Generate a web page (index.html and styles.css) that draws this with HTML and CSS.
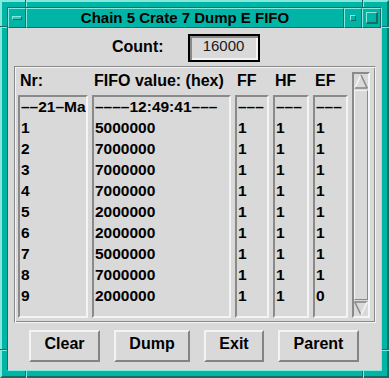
FILE: index.html
```html
<!DOCTYPE html>
<html>
<head>
<meta charset="utf-8">
<link rel="stylesheet" href="styles.css">
</head>
<body>
<div class="window">
  <div class="inner">
    <div class="titlebar">
      <div class="tb-seg tb-menu"><span class="menu-bar"></span></div>
      <div class="tb-seg tb-title">Chain 5 Crate 7 Dump E FIFO</div>
      <div class="tb-seg tb-min"><span class="min-sq"></span></div>
      <div class="tb-seg tb-max"><span class="max-sq"></span></div>
    </div>
    <div class="client">
      <div class="count-row">
        <span class="count-label">Count:</span>
        <div class="count-field">16000</div>
      </div>
      <div class="frame">
        <div class="cols">
          <div class="col col-nr">
            <div class="hdr">Nr:</div>
            <div class="list">
              <div class="row">––21–Ma</div>
              <div class="row">1</div><div class="row">2</div><div class="row">3</div>
              <div class="row">4</div><div class="row">5</div><div class="row">6</div>
              <div class="row">7</div><div class="row">8</div><div class="row">9</div>
            </div>
          </div>
          <div class="col col-fifo">
            <div class="hdr">FIFO value: (hex)</div>
            <div class="list">
              <div class="row">––––12:49:41–––</div>
              <div class="row">5000000</div><div class="row">7000000</div><div class="row">7000000</div>
              <div class="row">7000000</div><div class="row">2000000</div><div class="row">2000000</div>
              <div class="row">5000000</div><div class="row">7000000</div><div class="row">2000000</div>
            </div>
          </div>
          <div class="col col-ff">
            <div class="hdr">FF</div>
            <div class="list">
              <div class="row">–––</div>
              <div class="row">1</div><div class="row">1</div><div class="row">1</div>
              <div class="row">1</div><div class="row">1</div><div class="row">1</div>
              <div class="row">1</div><div class="row">1</div><div class="row">1</div>
            </div>
          </div>
          <div class="col col-hf">
            <div class="hdr">HF</div>
            <div class="list">
              <div class="row">–––</div>
              <div class="row">1</div><div class="row">1</div><div class="row">1</div>
              <div class="row">1</div><div class="row">1</div><div class="row">1</div>
              <div class="row">1</div><div class="row">1</div><div class="row">1</div>
            </div>
          </div>
          <div class="col col-ef">
            <div class="hdr">EF</div>
            <div class="list">
              <div class="row">–––</div>
              <div class="row">1</div><div class="row">1</div><div class="row">1</div>
              <div class="row">1</div><div class="row">1</div><div class="row">1</div>
              <div class="row">1</div><div class="row">1</div><div class="row">0</div>
            </div>
          </div>
          <div class="scrollbar">
            <svg class="arrow" width="14" height="15" viewBox="0 0 14 15">
              <polygon points="7,1 1,14 13,14" fill="#d9d9d9"/>
              <line x1="0.8" y1="14" x2="7" y2="1" stroke="#f4f4f4" stroke-width="1.6"/>
              <line x1="7" y1="1" x2="13.2" y2="14" stroke="#8a8a8a" stroke-width="1.6"/>
              <line x1="1" y1="14" x2="13.5" y2="14" stroke="#8a8a8a" stroke-width="1.6"/>
            </svg>
            <div class="slider"></div>
            <svg class="arrow" width="14" height="15" viewBox="0 0 14 15">
              <polygon points="1,1 13,1 7,14" fill="#d9d9d9"/>
              <line x1="0.5" y1="1" x2="13.5" y2="1" stroke="#8a8a8a" stroke-width="1.6"/>
              <line x1="0.8" y1="1" x2="7" y2="14" stroke="#8a8a8a" stroke-width="1.6"/>
              <line x1="7" y1="14" x2="13.2" y2="1" stroke="#f4f4f4" stroke-width="1.6"/>
            </svg>
          </div>
        </div>
      </div>
      <div class="buttons">
        <div class="btn btn-clear">Clear</div>
        <div class="btn btn-dump">Dump</div>
        <div class="btn btn-exit">Exit</div>
        <div class="btn btn-parent">Parent</div>
      </div>
    </div>
  </div>
  <div class="notches">
    <span class="nv n-tl"></span>
    <span class="nv n-tr"></span>
    <span class="nv n-bl"></span>
    <span class="nv n-br"></span>
    <span class="nh n-lt"></span>
    <span class="nh n-rt"></span>
    <span class="nh n-lb"></span>
    <span class="nh n-rb"></span>
  </div>
</div>
</body>
</html>
```

FILE: styles.css
```css
* { box-sizing: border-box; }
html, body { margin: 0; padding: 0; }
body {
  width: 389px;
  height: 378px;
  overflow: hidden;
  background: #00b5a5;
  font-family: "Liberation Sans", Arial, sans-serif;
  color: #000;
}
.window {
  position: relative;
  width: 389px;
  height: 378px;
  background: #00b5a5;
  border: 2px solid;
  border-color: #86e8dc #1d6a62 #1d6a62 #86e8dc;
  padding: 5px;
}
.inner {
  height: 100%;
  border: 1px solid;
  border-color: #1d6a62 #86e8dc #86e8dc #1d6a62;
  display: flex;
  flex-direction: column;
}
.titlebar {
  height: 20px;
  display: flex;
  flex: none;
}
.tb-seg {
  height: 20px;
  border: 1px solid;
  border-color: #86e8dc #1d6a62 #1d6a62 #86e8dc;
  background: #00b5a5;
  display: flex;
  align-items: center;
  justify-content: center;
}
.tb-menu, .tb-min { width: 18px; }
.tb-max { width: 19px; }
.tb-title {
  flex: 1;
  font-weight: bold;
  font-size: 15px;
  line-height: 18px;
  color: #000;
  white-space: nowrap;
}
.menu-bar {
  width: 10px;
  height: 4px;
  border: 1px solid;
  border-color: #86e8dc #1d6a62 #1d6a62 #86e8dc;
  background: #30c8b8;
}
.min-sq {
  width: 6px;
  height: 6px;
  border: 1px solid;
  border-color: #86e8dc #1d6a62 #1d6a62 #86e8dc;
  background: #00b5a5;
}
.max-sq {
  width: 12px;
  height: 12px;
  border-style: solid;
  border-width: 1px 2px 2px 1px;
  border-color: #86e8dc #1d6a62 #1d6a62 #86e8dc;
  background: #00b5a5;
}
.client {
  flex: 1;
  background: #d9d9d9;
  display: flex;
  flex-direction: column;
}
.count-row {
  margin-top: 6px;
  height: 28px;
  display: flex;
  align-items: flex-start;
  padding-left: 104px;
  gap: 24px;
}
.count-label {
  font-weight: bold;
  font-size: 16px;
  line-height: 16px;
  padding-top: 5px;
}
.count-field {
  width: 72px;
  height: 28px;
  border: 2px solid #000;
  box-shadow: inset 2px 2px 0 #8a8a8a, inset -2px -2px 0 #f4f4f4;
  font-size: 15px;
  line-height: 17px;
  padding-top: 1px;
  text-align: center;
  color: #1a1a1a;
}
.frame {
  margin: 4px 5px 0 6px;
  height: 257px;
  border: 1px solid;
  border-color: #8a8a8a #f4f4f4 #f4f4f4 #8a8a8a;
  box-shadow: inset 1px 1px 0 #f4f4f4, inset -1px -1px 0 #8a8a8a;
  padding: 5px 5px 4px 3px;
}
.cols {
  display: flex;
  gap: 4px;
  height: 246px;
}
.col {
  display: flex;
  flex-direction: column;
}
.col-nr { width: 70px; }
.col-fifo { width: 139px; }
.col-ff { width: 34px; }
.col-hf { width: 36px; }
.col-ef { width: 35px; }
.hdr {
  height: 23px;
  padding: 1px 0 0 2px;
  font-weight: bold;
  font-size: 16px;
  line-height: 16px;
  white-space: nowrap;
}
.list {
  flex: 1;
  border: 2px solid;
  border-color: #8a8a8a #f4f4f4 #f4f4f4 #8a8a8a;
  overflow: hidden;
  padding-left: 1px;
}
.row {
  height: 21px;
  font-weight: bold;
  font-size: 15.5px;
  line-height: 20px;
  white-space: nowrap;
  overflow: hidden;
}
.scrollbar {
  width: 18px;
  border: 2px solid;
  border-color: #8a8a8a #f4f4f4 #f4f4f4 #8a8a8a;
  display: flex;
  flex-direction: column;
}
.arrow { display: block; flex: none; }
.slider {
  flex: 1;
  border: 1px solid;
  border-color: #f4f4f4 #8a8a8a #8a8a8a #f4f4f4;
  margin: 1px 0;
}
.buttons {
  margin-top: 7px;
  height: 32px;
  display: flex;
  gap: 14px;
  padding-left: 21px;
}
.btn {
  height: 32px;
  border: 2px solid;
  border-color: #f4f4f4 #848484 #848484 #f4f4f4;
  font-weight: bold;
  font-size: 16px;
  line-height: 24px;
  text-align: center;
}
.btn-clear { width: 71px; }
.btn-dump { width: 76px; }
.btn-exit { width: 60px; }
.btn-parent { width: 81px; }
.notches {
  position: absolute;
  inset: -2px;
  pointer-events: none;
}
.nv, .nh {
  position: absolute;
  display: block;
}
.nv {
  width: 2px;
  height: 7px;
  border-left: 1px solid #1d6a62;
  border-right: 1px solid #86e8dc;
}
.nh {
  width: 7px;
  height: 2px;
  border-top: 1px solid #1d6a62;
  border-bottom: 1px solid #86e8dc;
}
.n-tl { left: 25px; top: 0; }
.n-tr { left: 362px; top: 0; }
.n-bl { left: 25px; top: 371px; }
.n-br { left: 362px; top: 371px; }
.n-lt { left: 0; top: 26px; }
.n-rt { left: 382px; top: 26px; }
.n-lb { left: 0; top: 349px; }
.n-rb { left: 382px; top: 349px; }
```
